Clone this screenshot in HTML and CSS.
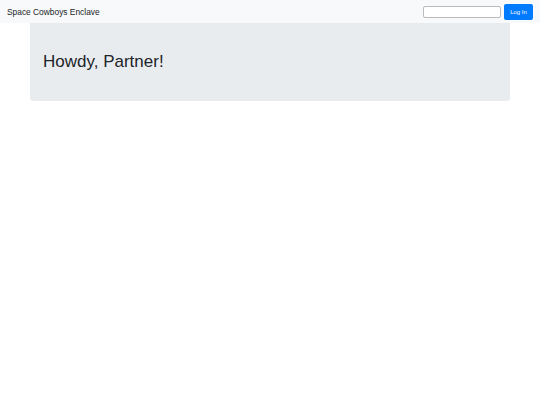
FILE: index.html
```html
<!DOCTYPE html>
<html>
<head>
<meta charset="utf-8">
<link rel="stylesheet" href="styles.css">
</head>
<body>
<nav class="navbar">
  <span class="brand">Space Cowboys Enclave</span>
  <form class="login">
    <input class="field" type="text">
    <button class="btn" type="button">Log In</button>
  </form>
</nav>
<div class="jumbotron">
  <h1 class="title">Howdy, Partner!</h1>
</div>
</body>
</html>
```
FILE: styles.css
```css
html, body {
  margin: 0;
  padding: 0;
  background: #fff;
  font-family: "Liberation Sans", Arial, sans-serif;
  color: #212529;
}
.navbar {
  height: 23px;
  background: #f8f9fa;
  display: flex;
  align-items: center;
  justify-content: space-between;
  padding: 0 7px;
}
.brand {
  font-size: 8.4px;
  color: #212529;
}
.login {
  display: flex;
  align-items: center;
  gap: 3px;
  margin: 0;
}
.field {
  box-sizing: border-box;
  width: 78px;
  height: 12px;
  margin: 0;
  padding: 0 2px;
  border: 1px solid #bbb;
  border-radius: 2px;
  background: #fff;
  font-size: 7px;
}
.btn {
  box-sizing: border-box;
  width: 29px;
  height: 16px;
  margin: 0;
  padding: 0;
  border: none;
  border-radius: 2px;
  background: #007bff;
  color: #fff;
  font-family: "Liberation Sans", Arial, sans-serif;
  font-size: 6px;
}
.jumbotron {
  margin: 0 30px;
  height: 78px;
  background: #e9ecef;
  border-radius: 0 0 3px 3px;
  display: flex;
  align-items: center;
  padding: 0 13px;
}
.title {
  margin: 0;
  font-size: 17px;
  font-weight: normal;
  color: #212529;
}
```
